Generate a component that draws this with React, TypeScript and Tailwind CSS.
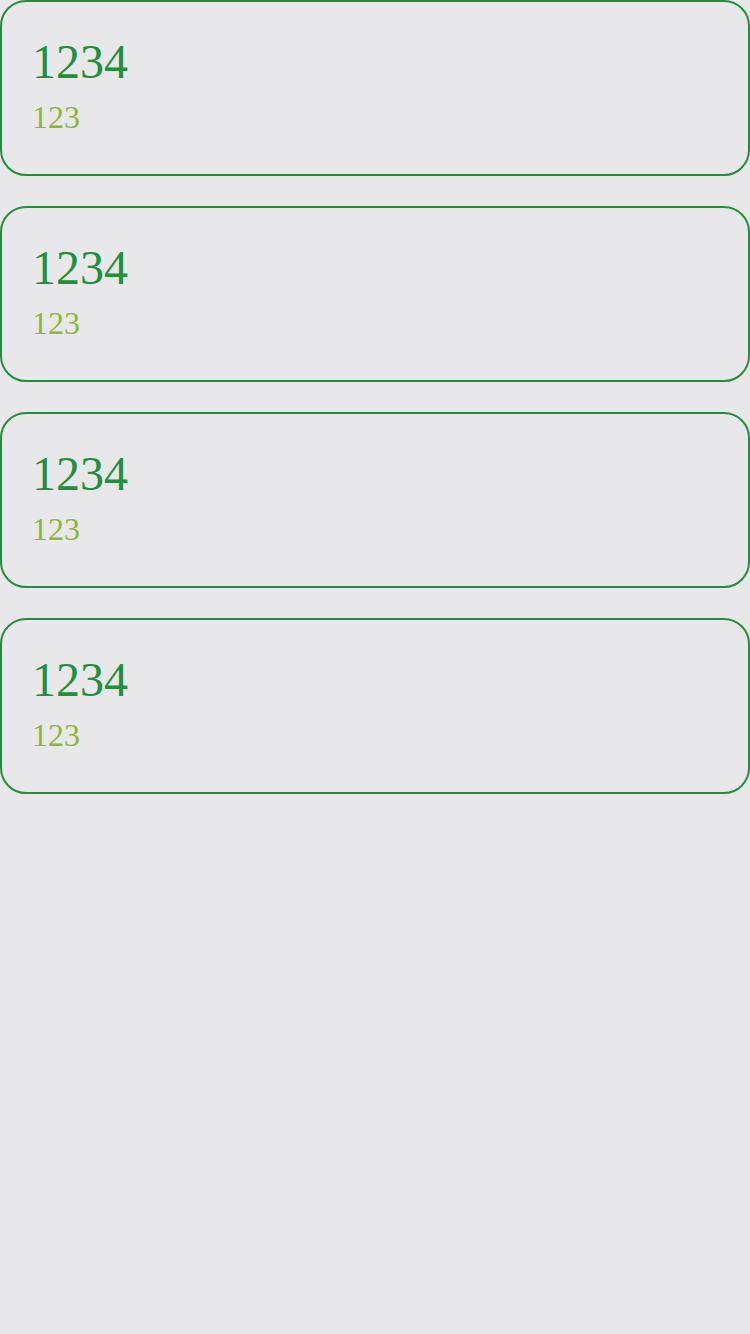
import React from 'react';

const items = [
  { id: 1, title: '1234', sub: '123' },
  { id: 2, title: '1234', sub: '123' },
  { id: 3, title: '1234', sub: '123' },
  { id: 4, title: '1234', sub: '123' },
];

export default function App() {
  return (
    <div
      className="min-h-[1334px] w-[750px] bg-[#e8e8ea]"
      style={{ fontFamily: '"Liberation Serif", serif' }}
    >
      <div className="flex flex-col gap-[30px]">
        {items.map(item => (
          <div
            key={item.id}
            className="h-[176px] rounded-[26px] border-2 border-[#228f3d] px-[30px] pt-8"
          >
            <div className="text-[48px] leading-[55px] text-[#228f3d]">{item.title}</div>
            <div className="mt-[10px] text-[32px] leading-[37px] text-[#8db735]">{item.sub}</div>
          </div>
        ))}
      </div>
    </div>
  );
}
